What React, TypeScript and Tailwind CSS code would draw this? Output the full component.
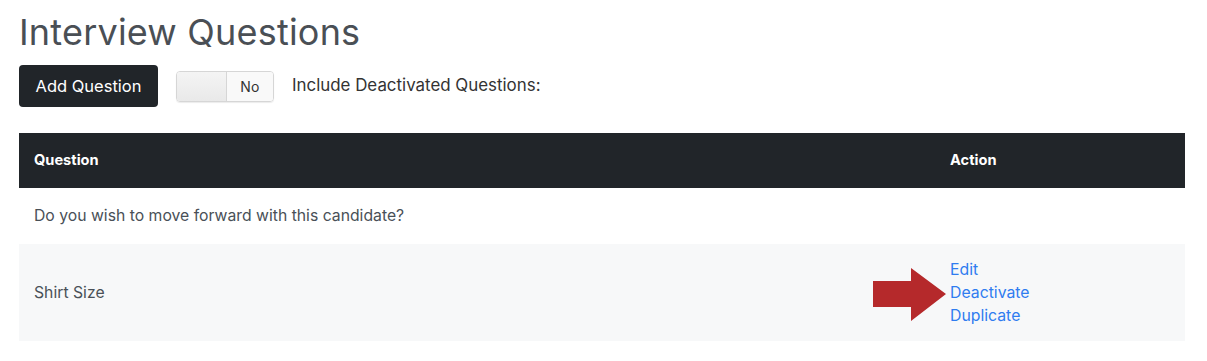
import React from "react";

export default function App() {
  const font = { fontFamily: "Inter, 'Open Sans', sans-serif" };
  return (
    <div className="bg-white w-[1207px] h-[361px] overflow-hidden text-[#495057]" style={font}>
      <div className="pl-[19px] pr-[22px]">
        <h1 className="text-[36px] leading-[40px] pt-[12px] text-[#4a4f55] font-normal tracking-[0.2px]">Interview Questions</h1>
        <div className="flex items-center mt-[13px] h-[42px]">
          <button className="h-[42px] w-[139px] rounded-[4px] bg-[#212529] text-white text-[16.5px]">Add Question</button>
          <div className="ml-[18px] flex h-[31px] w-[98px] rounded-[4px] border border-[#d6d6d6] overflow-hidden shadow-[0_1px_1px_rgba(0,0,0,0.08)]">
            <div className="w-[50px] bg-gradient-to-b from-[#f4f4f4] to-[#e9e9e9] border-r border-[#d6d6d6]" />
            <div className="flex-1 flex items-center justify-center text-[14px] text-[#333] bg-[#f9f9f9] tracking-[0.3px]">No</div>
          </div>
          <span className="ml-[18px] text-[16.9px] text-[#333]">Include Deactivated Questions:</span>
        </div>
        <table className="mt-[26px] w-[1166px] border-collapse text-[15.75px]">
          <thead>
            <tr className="bg-[#212529] text-white h-[55px]">
              <th className="text-left font-bold pl-[15px] text-[14.6px]">Question</th>
              <th className="text-left font-bold pl-[15px] w-[250px] text-[14.6px]">Action</th>
            </tr>
          </thead>
          <tbody>
            <tr className="h-[56px] bg-white">
              <td className="pl-[15px]">Do you wish to move forward with this candidate?</td>
              <td />
            </tr>
            <tr className="h-[97px] bg-[#f7f8f9]">
              <td className="pl-[15px]">Shirt Size</td>
              <td className="pl-[15px] relative">
                <svg className="absolute left-[-62px] top-[24px]" width="74" height="53" viewBox="0 0 74 53">
                  <polygon points="0,13 38,13 38,0 73,26 38,53 38,39 0,39" fill="#b5292b" />
                </svg>
                <div className="flex flex-col text-[#2f7cf0] leading-[23px] text-[15.8px]">
                  <a>Edit</a>
                  <a>Deactivate</a>
                  <a>Duplicate</a>
                </div>
              </td>
            </tr>
          </tbody>
        </table>
      </div>
    </div>
  );
}
